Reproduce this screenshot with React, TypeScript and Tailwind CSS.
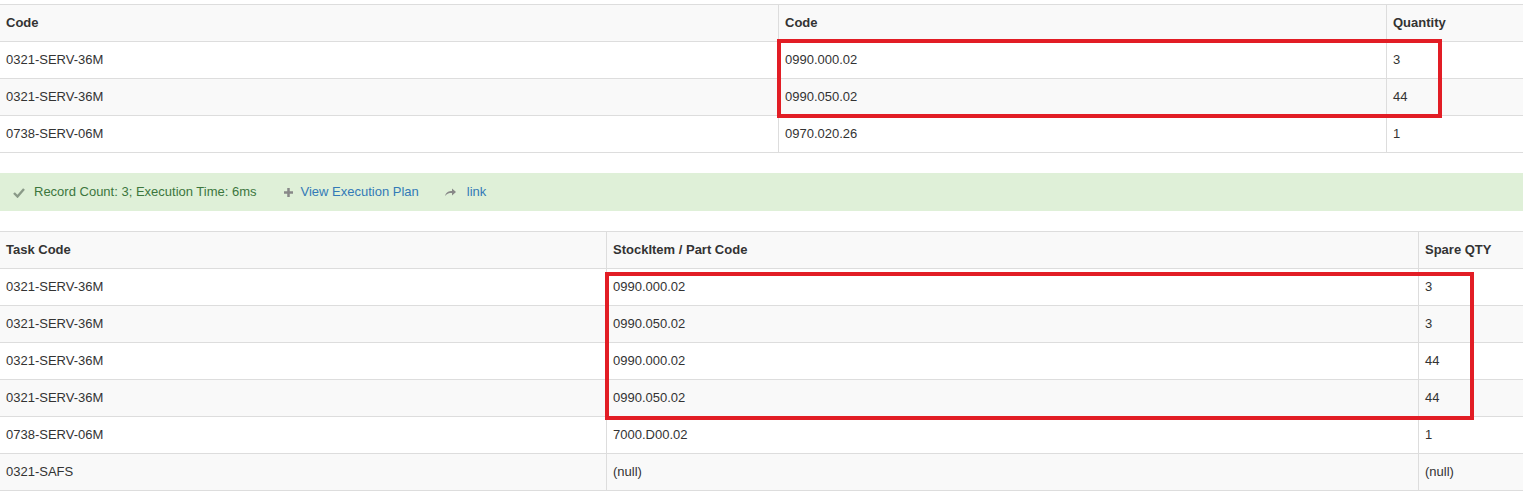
import React from "react";

const F = { fontFamily: '"Liberation Sans", Arial, sans-serif' };

function Table({ cols, head, rows }: { cols: string; head: string[]; rows: string[][] }) {
  return (
    <div className="border-t border-[#dddddd]">
      <div className={`grid ${cols} bg-[#f9f9f9] border-b border-[#dddddd] h-[37px]`}>
        {head.map((h, i) => (
          <div key={i} className={`px-[6px] flex items-center font-bold ${i > 0 ? "border-l border-[#dddddd]" : ""}`}>{h}</div>
        ))}
      </div>
      {rows.map((r, ri) => (
        <div key={ri} className={`grid ${cols} h-[37px] border-b border-[#dddddd] ${ri % 2 === 1 ? "bg-[#f9f9f9]" : "bg-white"}`}>
          {r.map((c, i) => (
            <div key={i} className={`px-[6px] flex items-center ${i > 0 ? "border-l border-[#dddddd]" : ""}`}>{c}</div>
          ))}
        </div>
      ))}
    </div>
  );
}

export default function App() {
  return (
    <div style={F} className="relative w-[1523px] h-[501px] bg-white text-[13px] text-[#333333] pt-[4px]">
      <Table
        cols="grid-cols-[778px_608px_137px]"
        head={["Code", "Code", "Quantity"]}
        rows={[
          ["0321-SERV-36M", "0990.000.02", "3"],
          ["0321-SERV-36M", "0990.050.02", "44"],
          ["0738-SERV-06M", "0970.020.26", "1"],
        ]}
      />
      <div className="mt-[20px] h-[38px] bg-[#dff0d8] flex items-center pl-[13px] text-[#3c763d]">
        <svg width="12" height="11" viewBox="0 0 12 11" className="mr-[9px]"><path d="M1 6 L4.5 9.5 L11 2" stroke="#8a9a88" strokeWidth="2.4" fill="none" /></svg>
        <span>Record Count: 3; Execution Time: 6ms</span>
        <svg width="11" height="11" viewBox="0 0 11 11" className="ml-[26px] mr-[7px]"><path d="M5.5 1 V10 M1 5.5 H10" stroke="#888" strokeWidth="2.5" /></svg>
        <span className="text-[#337ab7]">View Execution Plan</span>
        <svg width="13" height="10" viewBox="0 0 13 10" className="ml-[25px] mr-[10px]"><path d="M1 9 C2 5 5 4 8 4 V1.5 L12 5 L8 8.5 V6 C5 6 3 6.5 1 9 Z" fill="#888" /></svg>
        <span className="text-[#337ab7]">link</span>
      </div>
      <div className="mt-[20px]">
        <Table
          cols="grid-cols-[606px_812px_105px]"
          head={["Task Code", "StockItem / Part Code", "Spare QTY"]}
          rows={[
            ["0321-SERV-36M", "0990.000.02", "3"],
            ["0321-SERV-36M", "0990.050.02", "3"],
            ["0321-SERV-36M", "0990.000.02", "44"],
            ["0321-SERV-36M", "0990.050.02", "44"],
            ["0738-SERV-06M", "7000.D00.02", "1"],
            ["0321-SAFS", "(null)", "(null)"],
          ]}
        />
      </div>
      <div className="absolute left-[777px] top-[39px] w-[665px] h-[79px] border-[4px] border-[#e21d25]" />
      <div className="absolute left-[605px] top-[272px] w-[869px] h-[148px] border-[4px] border-[#e21d25]" />
    </div>
  );
}
